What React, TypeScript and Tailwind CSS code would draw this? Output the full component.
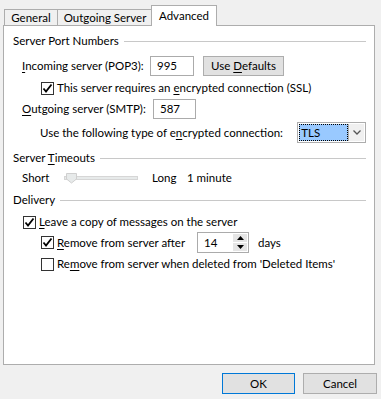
import React from 'react';

const Check: React.FC<{ checked?: boolean }> = ({ checked }) => (
  <span className="w-[13px] h-[13px] shrink-0 border border-[#333333] bg-white flex items-center justify-center">
    {checked && (
      <svg width="11" height="11" viewBox="0 0 11 11">
        <path d="M1.5 5.5 L4 8.5 L9.5 1.5" fill="none" stroke="#000" strokeWidth="1.8" />
      </svg>
    )}
  </span>
);

const Heading: React.FC<{ children: React.ReactNode }> = ({ children }) => (
  <div className="h-[16px] flex items-center">
    <span className="whitespace-nowrap">{children}</span>
    <div className="flex-1 h-px bg-[#c8c8c8] ml-[5px]" />
  </div>
);

const U: React.FC<{ children: React.ReactNode }> = ({ children }) => (
  <span className="underline underline-offset-[2px]">{children}</span>
);

const App: React.FC = () => {
  return (
    <div
      className="w-[381px] h-[399px] bg-[#f0f0f0] flex flex-col text-[11.5px] leading-[16px] text-black"
      style={{ fontFamily: '"Segoe UI", Lato, "Noto Sans", sans-serif' }}
    >
      {/* tab strip */}
      <div className="h-[25px] flex items-end pl-[4px] shrink-0">
        <div className="w-[54px] h-[16px] border border-b-0 border-[#adadad] flex items-center justify-center">
          General
        </div>
        <div className="w-[96px] h-[16px] -ml-px border border-b-0 border-[#adadad] flex items-center justify-center">
          Outgoing Server
        </div>
        <div className="relative z-10 w-[66px] h-[21px] -ml-[2px] -mb-px bg-white border border-b-0 border-[#adadad] flex items-start justify-center pt-[2px]">
          Advanced
        </div>
      </div>

      {/* panel */}
      <div className="ml-[3px] w-[372px] h-[340px] shrink-0 bg-white border border-[#adadad] pl-[9px] pr-[8px] flex flex-col">
        <div className="mt-[7px]">
          <Heading>Server Port Numbers</Heading>
        </div>

        <div className="mt-[7px] h-[20px] flex items-center ml-[9px]">
          <span className="w-[128px] whitespace-nowrap"><U>I</U>ncoming server (POP3):</span>
          <div className="w-[44px] h-[20px] border border-[#ababab] bg-white flex items-center pl-[6px]">995</div>
          <div className="ml-[9px] w-[81px] h-[20px] border border-[#adadad] bg-[#e1e1e1] flex items-center justify-center">
            <span>Use <U>D</U>efaults</span>
          </div>
        </div>

        <div className="mt-[4px] h-[16px] flex items-center ml-[28px]">
          <Check checked />
          <span className="ml-[3px] whitespace-nowrap">This server requires an <U>e</U>ncrypted connection (SSL)</span>
        </div>

        <div className="mt-[3px] h-[20px] flex items-center ml-[9px]">
          <span className="w-[131px] whitespace-nowrap"><U>O</U>utgoing server (SMTP):</span>
          <div className="w-[43px] h-[20px] border border-[#ababab] bg-white flex items-center pl-[6px]">587</div>
        </div>

        <div className="mt-[3px] h-[21px] flex items-center ml-[27px]">
          <span className="w-[258px] whitespace-nowrap">Use the following type of e<U>n</U>crypted connection:</span>
          <div className="w-[69px] h-[21px] border border-[#adadad] bg-white flex p-[1px]">
            <div className="w-[49px] h-full bg-[#99c9ff] border border-dotted border-black flex items-center pl-[1px]">TLS</div>
            <div className="flex-1 border-l border-[#adadad] bg-[#f0f0f0] flex items-center justify-center">
              <svg width="8" height="5" viewBox="0 0 8 5">
                <path d="M0.5 0.5 L4 4 L7.5 0.5" fill="none" stroke="#555" strokeWidth="1.3" />
              </svg>
            </div>
          </div>
        </div>

        <div className="mt-[7px]">
          <Heading>Server <U>T</U>imeouts</Heading>
        </div>

        <div className="mt-[4px] h-[16px] flex items-center ml-[9px]">
          <span className="w-[42px]">Short</span>
          <div className="relative w-[74px] h-[4px] bg-[#e7eaea] border border-[#d6d6d6]">
            <svg className="absolute left-[1px] -top-[4px]" width="11" height="11" viewBox="0 0 11 11">
              <path d="M0.5 0.5 H10.5 V6 L5.5 10 L0.5 6 Z" fill="#e7eaea" stroke="#cfcfcf" />
            </svg>
          </div>
          <span className="ml-[14px] w-[35px]">Long</span>
          <span>1 minute</span>
        </div>

        <div className="mt-[6px]">
          <Heading>Delivery</Heading>
        </div>

        <div className="mt-[6px] h-[16px] flex items-center ml-[10px]">
          <Check checked />
          <span className="ml-[3px] whitespace-nowrap"><U>L</U>eave a copy of messages on the server</span>
        </div>

        <div className="mt-[2px] h-[21px] flex items-center ml-[28px]">
          <Check checked />
          <span className="ml-[3px] w-[140px] whitespace-nowrap"><U>R</U>emove from server after</span>
          <div className="w-[52px] h-[21px] border border-[#ababab] bg-white flex">
            <span className="flex-1 flex items-center pl-[6px] pt-[1px]">14</span>
            <div className="w-[16px] flex flex-col p-[1px]">
              <div className="flex-1 bg-[#e5e5e5] border-b border-[#ffffff] flex items-center justify-center">
                <svg width="7" height="4" viewBox="0 0 7 4"><path d="M0 4 L3.5 0 L7 4 Z" fill="#000" /></svg>
              </div>
              <div className="flex-1 bg-[#e5e5e5] flex items-center justify-center">
                <svg width="7" height="4" viewBox="0 0 7 4"><path d="M0 0 L3.5 4 L7 0 Z" fill="#000" /></svg>
              </div>
            </div>
          </div>
          <span className="ml-[9px]">days</span>
        </div>

        <div className="mt-[3px] h-[16px] flex items-center ml-[28px]">
          <Check />
          <span className="ml-[3px] whitespace-nowrap">Re<U>m</U>ove from server when deleted from 'Deleted Items'</span>
        </div>
      </div>

      {/* footer buttons */}
      <div className="mt-[8px] flex justify-end pr-[4px] gap-[8px]">
        <div className="w-[73px] h-[21px] bg-[#e1e1e1] border border-[#0078d7] flex items-center justify-center">OK</div>
        <div className="w-[74px] h-[21px] bg-[#e1e1e1] border border-[#adadad] flex items-center justify-center">Cancel</div>
      </div>
    </div>
  );
};

export default App;
